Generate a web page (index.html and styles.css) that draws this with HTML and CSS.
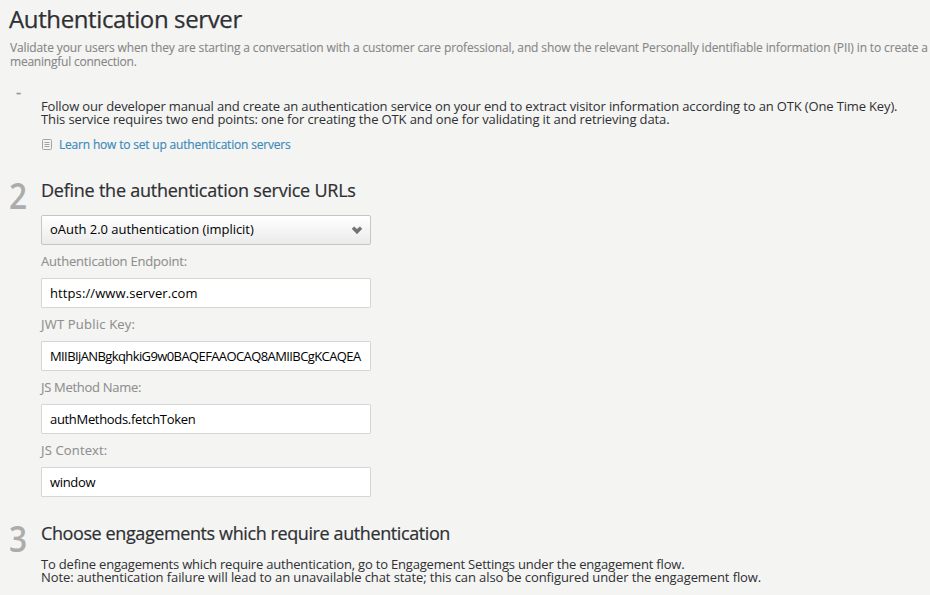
FILE: index.html
```html
<!DOCTYPE html>
<html lang="en">
<head>
<meta charset="utf-8">
<title>Authentication server</title>
<link rel="stylesheet" href="styles.css">
</head>
<body>
<header class="intro">
  <h1>Authentication server</h1>
  <p class="subtitle"><span class="line sub-a">Validate your users when they are starting a conversation with a customer care professional, and show the relevant Personally identifiable information (PII) in to create a</span> <span class="line sub-b">meaningful connection.</span></p>
</header>
<section class="step step-one">
  <div class="dash">-</div>
  <div class="content">
    <p class="text"><span class="line text-a">Follow our developer manual and create an authentication service on your end to extract visitor information according to an OTK (One Time Key).</span> <span class="line text-b">This service requires two end points: one for creating the OTK and one for validating it and retrieving data.</span></p>
    <a class="link"><svg width="11" height="12" viewBox="0 0 11 12" fill="none" stroke="#a3a3a3"><rect x="1.5" y=".5" width="9" height="10" rx="1"/><path d="M3.5 3.5h5M3.5 5.5h5M3.5 7.5h5"/></svg><span>Learn how to set up authentication servers</span></a>
  </div>
</section>
<section class="step step-two">
  <div class="number">2</div>
  <div class="content">
    <h2 class="h-a">Define the authentication service URLs</h2>
    <div class="field select"><span class="v-select">oAuth 2.0 authentication (implicit)</span><svg width="12" height="9" viewBox="0 0 12 9"><path d="M1 2.8 3.1.8 6 3.3 8.9.8 11 2.8 6 7.9z" fill="#737373" stroke="#737373" stroke-width=".5" stroke-linejoin="round"/></svg></div>
    <div class="label l-a">Authentication Endpoint:</div>
    <div class="field v-a">https://www.server.com</div>
    <div class="label l-b">JWT Public Key:</div>
    <div class="field v-b">MIIBIjANBgkqhkiG9w0BAQEFAAOCAQ8AMIIBCgKCAQEA</div>
    <div class="label l-c">JS Method Name:</div>
    <div class="field v-c">authMethods.fetchToken</div>
    <div class="label l-d">JS Context:</div>
    <div class="field v-d">window</div>
  </div>
</section>
<section class="step step-three">
  <div class="number">3</div>
  <div class="content">
    <h2 class="h-b">Choose engagements which require authentication</h2>
    <p class="text"><span class="line text-c">To define engagements which require authentication, go to Engagement Settings under the engagement flow.</span> <span class="line text-d">Note: authentication failure will lead to an unavailable chat state; this can also be configured under the engagement flow.</span></p>
  </div>
</section>
</body>
</html>
```
FILE: styles.css
```css
* { box-sizing: border-box; }
body { margin: 0; height: 595px; overflow: hidden; background: #f4f4f2; color: #2e3034; font: 13px/13px "Trebuchet MS", "Open Sans", sans-serif; white-space: nowrap; }
h1, h2, p { margin: 0; font-weight: 400; }
.line { display: block; }
.intro { padding: 5px 0 0 9px; }
h1 { font-size: 24px; line-height: 28px; letter-spacing: -.38px; -webkit-text-stroke: .25px; }
.subtitle { margin: 8px 0 0 1px; font-size: 12px; line-height: 14px; color: #868686; -webkit-text-stroke: .1px; }
.sub-a { letter-spacing: -.13px; }
.sub-b { letter-spacing: -.22px; }

.step { display: grid; grid-template-columns: 32px 1fr; padding-left: 9px; }
.step-one { margin-top: 16px; }
.dash { padding: 0 0 0 7px; color: #999; font-size: 16px; line-height: 14px; -webkit-text-stroke: .3px; }
.step-one .content { padding-top: 15px; }
.text-a { letter-spacing: -.147px; }
.text-b { letter-spacing: -.12px; }
.text-c { letter-spacing: -.19px; }
.text-d { letter-spacing: -.1px; }
.link { display: flex; align-items: center; gap: 7px; height: 16px; margin-top: 11px; color: #3a8abb; font-size: 12px; line-height: 16px; letter-spacing: -.19px; -webkit-text-stroke: .15px; }

.step-two { margin-top: 26px; }
.number { height: 34px; color: #acacac; font-size: 36px; line-height: 34px; font-weight: 600; transform-origin: left; transform: scaleX(.88); }
h2 { font-size: 18px; line-height: 22px; -webkit-text-stroke: .2px; }
.h-a { letter-spacing: -.24px; }
.h-b { letter-spacing: -.4px; }
.field { width: 330px; height: 30px; padding: 0 9px 0 8px; border: 1px solid #d6d6d6; border-radius: 1px; background: #fff; color: #000; line-height: 28px; }
.select { display: flex; align-items: center; justify-content: space-between; padding-right: 7px; margin-top: 14px; border-color: #c6c6c6; border-radius: 2px; background: linear-gradient(#fff, #ebebeb); }
.label { height: 33px; line-height: 32px; color: #8f8f8f; -webkit-text-stroke: .1px; }
.v-select { height: 28px; line-height: 26px; letter-spacing: -.03px; }
.v-a { letter-spacing: .1px; }
.v-b { letter-spacing: -.6px; }
.v-c { letter-spacing: -.32px; }
.v-d { letter-spacing: -.33px; }
.l-a { letter-spacing: -.2px; }
.l-b { letter-spacing: .2px; }
.l-c { letter-spacing: -.3px; }
.l-d { letter-spacing: .15px; }

.step-three { margin-top: 25px; }
.step-three .text { margin-top: 14px; }
```
